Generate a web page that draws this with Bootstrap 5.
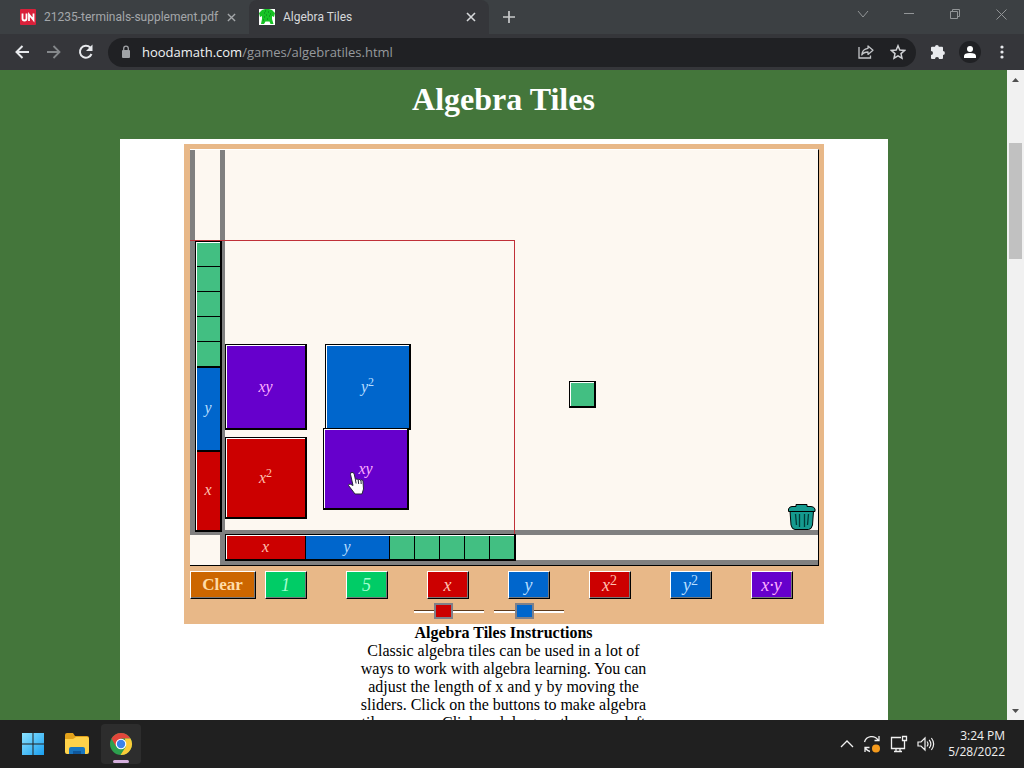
<!DOCTYPE html>
<html lang="en">
<head>
<meta charset="utf-8">
<meta name="viewport" content="width=device-width, initial-scale=1">
<title>Algebra Tiles</title>
<link href="https://cdn.jsdelivr.net/npm/bootstrap@5.3.0/dist/css/bootstrap.min.css" rel="stylesheet">
<style>
  body { font: 12px/16px "Open Sans", "Noto Sans", sans-serif; background: #44763b; color: #dfe1e3; }
  button, a { color: inherit; text-decoration: none; }
  svg { display: block; flex: none; }
  .flat { border: 0; background: none; padding: 0; display: flex; align-items: center; justify-content: center; }

  /* browser frame */
  .tabstrip { height: 34px; background: #3c4043; }
  .tab-item { width: 240px; height: 34px; padding: 0 13px 0 20px; color: #a4a7aa; font-family: Roboto, sans-serif; }
  .tab-item .tab-link { flex: 1; white-space: nowrap; }
  .tab-item.current { background: #35363a; color: #d6d8da; border-radius: 8px 8px 0 0; padding: 0 13px 0 10px; }
  .first-tab { width: 249px; }
  .new-tab { width: 40px; }
  .win-btn { width: 46px; height: 28px; color: #929597; }
  .toolbar { height: 36px; background: #35363a; padding-right: 6px; padding-left: 6px; }
  .tool-btn { width: 32px; height: 32px; color: #e8eaed; }
  .omnibox { flex: 1; height: 29px; border-radius: 15px; background: #202124; margin: 0 6px; padding: 0 2px 0 12px; }
  .omnibox input, .omnibox label { font-size: 13px; line-height: 20px; }
  .omnibox label { color: #f1f3f4; margin-left: 10px; }
  .omnibox input { flex: 1; min-width: 0; border: 0; background: none; color: #96999d; padding: 0; outline: 0; }
  .avatar { width: 22px; height: 22px; border-radius: 50%; background: #202124; overflow: hidden; }

  /* page */
  .viewport { flex: 1; min-height: 0; }
  .doc { flex: 1; overflow: hidden; font-family: "Liberation Serif", "Times New Roman", serif; font-size: 16px; line-height: 18px; color: #000; }
  .doc h1 { font-size: 32px; line-height: 36px; font-weight: 700; color: #fff; padding: 11px 0 22px; margin: 0; }
  .sheet { max-width: 768px; background: #fff; padding-top: 5px; }
  .applet { max-width: 640px; background: #e8b888; padding: 5px 5px 4px 6px; height: 480px; }
  .notes { width: 290px; }
  .scroller { width: 17px; background: #f1f1f1; padding: 8px 2px 7px; color: #505050; }
  .thumb { width: 13px; height: 116px; background: #c1c1c1; margin-top: 61px; }

  /* board: tiles lie on a free canvas */
  .board { position: relative; height: 417px; background: #fdf8f1; border: 1px solid #000; border-width: 0 1px 1px 0; border-top: 1px solid #fff; margin-bottom: 5px; overflow: hidden; }
  .board > * { position: absolute; }
  .rail { background: #808080; }
  .tile { border: 1px solid #000; border-width: 1px 2px 2px 1px; box-shadow: inset 1px 1px #fff; display: flex; align-items: center; justify-content: center; font-style: italic; padding-left: 1px; }
  .strip { display: flex; border: 1px solid #000; border-width: 1px 2px 2px 1px; box-shadow: inset 1px 1px #fff; padding: 1px 0 0 1px; }
  .strip > span { display: flex; align-items: center; justify-content: center; font-style: italic; padding-bottom: 2px; }
  .strip.down { flex-direction: column; }
  .down > span + span { border-top: 1px solid #000; }
  .across > span + span { border-left: 1px solid #000; }
  .unit { background: #42bf82; flex: 0 0 25px; }
  .down .unit:first-child { flex-basis: 23px; }
  .ylen { flex: 0 0 84px; }
  .xlen { flex: 1; }
  .strip.down .ylen, .strip.down .xlen { border-top-width: 2px; }
  .red { background: #c00; color: #ffc0b0; }
  .blue { background: #06c; color: #b8deff; }
  .violet { background: #60c; color: #ffb0ff; }
  .green { background: #0c6; color: #a4ffd0; }
  .orange { background: #cc6600; color: #ffdca8; }
  sup { font-size: 12px; top: -6px; line-height: 0; font-style: normal; }
  .guide { border: 1px solid #c03038; border-width: 1px 1px 0 0; }

  .keys { gap: 39px; }
  .key { width: 42px; height: 28px; padding: 0; font-style: italic; font-size: 18px; line-height: 24px; border: 1px solid #fff; border-right-color: #000; border-bottom-color: #000; box-shadow: inset -1px -1px #777; border-radius: 0; }
  .key sup { font-size: 14px; }
  .key.wide { width: 66px; margin-right: -30px; font-style: normal; font-weight: 700; font-size: 17px; }
  .sliders { gap: 10px; padding-left: 224px; margin-top: 3px; }
  .sliders input { appearance: none; -webkit-appearance: none; width: 70px; height: 18px; background: none; margin: 0; display: block; }
  .sliders input::-webkit-slider-runnable-track { height: 3px; background: #fff; border-top: 1px solid #5c3a1c; }
  .sliders input::-webkit-slider-thumb { -webkit-appearance: none; width: 19px; height: 16px; margin-top: -8px; border: 2px solid #808088; background: #c00; }
  .sliders input.yval::-webkit-slider-thumb { background: #06c; }

  /* taskbar */
  .taskbar { height: 48px; background: #202020; padding: 0 19px 0 13px; }
  .task { width: 40px; height: 40px; border-radius: 4px; margin-right: 4px; position: relative; }
  .task.open { background: #2d2d2d; }
  .task.open::after { content: ""; position: absolute; left: 12px; bottom: 1px; width: 16px; height: 3px; border-radius: 2px; background: #d5b0de; }
  .tray { gap: 9px; color: #f0f0f0; }
</style>
</head>
<body class="d-flex flex-column vh-100 overflow-hidden">

<header>
  <div class="tabstrip d-flex">
    <div class="tab-item first-tab d-flex align-items-center">
      <svg width="16" height="16" viewBox="0 0 16 16" class="me-2"><rect width="16" height="16" rx="1" fill="#d9203a"/><path d="M2.500 4.500v5q0 2 2 2t2-2v-5M9 12V5.500l4.500 5.500V4.500" fill="none" stroke="#fff" stroke-width="1.800"/></svg>
      <a class="tab-link" href="#">21235-terminals-supplement.pdf</a>
      <button class="flat" aria-label="Close tab"><svg width="9" height="9" viewBox="0 0 10 10" stroke="currentColor" stroke-width="1.500"><path d="M1 1l8 8M9 1l-8 8"/></svg></button>
    </div>
    <div class="tab-item current d-flex align-items-center">
      <svg width="16" height="16" viewBox="0 0 16 16" class="me-2"><path fill="#fff" d="M0 0h16v16H0z"/><path d="M3 1l3-1h4l3 1 3 3-1 4-2-1v3l1.500 5h-3l-1-2.500h-4L5 15H2l1-5V7L1 8 0 4z" fill="#17c325"/><path d="M5 4h1M9 3h1M7 6h1M10 7h1M5 8h1M8 10h1M6 2h1M11 5h1M4 11h1" stroke="#087a18"/></svg>
      <a class="tab-link" href="#">Algebra Tiles</a>
      <button class="flat" aria-label="Close tab"><svg width="10" height="10" viewBox="0 0 10 10" stroke="currentColor" stroke-width="1.600"><path d="M1 1l8 8M9 1l-8 8"/></svg></button>
    </div>
    <button class="flat new-tab" aria-label="New tab"><svg width="12" height="12" viewBox="0 0 12 12" stroke="#c8cacc" stroke-width="1.700"><path d="M6 0v12M0 6h12"/></svg></button>
    <div class="d-flex ms-auto">
      <button class="flat win-btn" aria-label="Search tabs"><svg width="12" height="8" viewBox="0 0 12 8" fill="none" stroke="currentColor"><path d="M1 1l5 6 5-6"/></svg></button>
      <button class="flat win-btn" aria-label="Minimize"><svg width="10" height="2" viewBox="0 0 10 2"><path fill="currentColor" d="M0 0h10v1H0z"/></svg></button>
      <button class="flat win-btn" aria-label="Restore"><svg width="10" height="10" viewBox="0 0 10 10" fill="none" stroke="currentColor"><path d="M.5 2.500h7v7h-7zM2.500 2.500v-2h7v7h-2"/></svg></button>
      <button class="flat win-btn" aria-label="Close"><svg width="11" height="11" viewBox="0 0 11 11" stroke="currentColor"><path d="M.5.500l10 10M10.500.500l-10 10"/></svg></button>
    </div>
  </div>
  <div class="toolbar d-flex align-items-center">
    <button class="flat tool-btn" aria-label="Back"><svg width="14" height="14" viewBox="0 0 14 14" fill="none" stroke="currentColor" stroke-width="2"><path d="M14 7H1.500M7.500 1l-6 6 6 6"/></svg></button>
    <button class="flat tool-btn" aria-label="Forward"><svg width="14" height="14" viewBox="0 0 14 14" fill="none" stroke="#85888b" stroke-width="1.800"><path d="M0 7h12.500M6.500 1l6 6-6 6"/></svg></button>
    <button class="flat tool-btn" aria-label="Reload"><svg width="16" height="16" viewBox="0 0 16 16"><path d="M13.500 10a6 6 0 1 1-1.300-6.500" fill="none" stroke="currentColor" stroke-width="2"/><path d="M14.500.500V7H8z" fill="currentColor"/></svg></button>
    <form class="omnibox d-flex align-items-center">
      <svg width="12" height="14" viewBox="0 0 12 14"><rect x="2" y="5" width="8" height="8" rx="1" fill="#a0a3a6"/><path d="M3.700 6V3.500a2.300 2.300 0 0 1 4.600 0V6" fill="none" stroke="#a0a3a6" stroke-width="1.300"/></svg>
      <label for="address">hoodamath.com</label>
      <input id="address" type="text" value="/games/algebratiles.html">
      <button type="button" class="flat tool-btn" aria-label="Share"><svg width="16" height="14" viewBox="0 0 16 14" fill="none" stroke="#c3c5c8" stroke-width="1.300"><path d="M1 2v11h11.500v-2.500"/><path d="M10 1l5 4.200-5 4.200V7C7 7 5 8 3.800 10 4 6.500 6 3.800 10 3.300z" stroke-linejoin="round"/></svg></button>
      <button type="button" class="flat tool-btn" aria-label="Bookmark"><svg width="16" height="16" viewBox="0 0 16 16" fill="none" stroke="#d0d2d5" stroke-width="1.500"><path d="M8 1.800l1.800 4.300 4.700.4-3.500 3.100 1 4.600L8 11.800l-4 2.400 1-4.600L1.500 6.500l4.700-.4z"/></svg></button>
    </form>
    <button class="flat tool-btn" aria-label="Extensions"><svg width="16" height="16" viewBox="0 0 16 16" fill="currentColor"><path d="M5 2.800a1.900 1.900 0 0 1 3.800 0H12q1 0 1 1v3.300a1.900 1.900 0 0 1 0 3.800V14q0 1-1 1H9a2 2 0 0 0-4 0H2q-1 0-1-1v-3a2 2 0 0 0 0-4V3.800q0-1 1-1z"/></svg></button>
    <button class="flat tool-btn" aria-label="Profile"><span class="avatar"><svg width="22" height="22" viewBox="0 0 22 22" fill="#fff"><circle cx="11" cy="8" r="3"/><path d="M5 17v-2q0-3 6-3t6 3v2z"/></svg></span></button>
    <button class="flat tool-btn" aria-label="Menu"><svg width="4" height="14" viewBox="0 0 4 14" fill="currentColor"><circle cx="2" cy="2" r="1.600"/><circle cx="2" cy="7" r="1.600"/><circle cx="2" cy="12" r="1.600"/></svg></button>
  </div>
</header>

<div class="viewport d-flex">
  <main class="doc">
    <h1 class="text-center">Algebra Tiles</h1>
    <div class="sheet mx-auto">
      <div class="applet mx-auto">
        <div class="board">
          <div class="rail" style="left:0;top:0;width:5px;height:385px"></div>
          <div class="rail" style="left:30px;top:0;width:5px;height:415px"></div>
          <div class="rail" style="left:0;right:0;top:380px;height:5px"></div>
          <div class="rail" style="left:30px;right:0;top:410px;height:5px"></div>
          <div class="guide" style="left:0;top:90px;width:325px;height:320px"></div>
          <div class="strip down" style="left:5px;top:91px;width:27px;height:291px">
            <span class="unit"></span><span class="unit"></span><span class="unit"></span><span class="unit"></span><span class="unit"></span>
            <span class="blue ylen">y</span><span class="red xlen">x</span>
          </div>
          <div class="strip across" style="left:35px;top:384px;width:291px;height:27px">
            <span class="red xlen">x</span><span class="blue ylen">y</span>
            <span class="unit"></span><span class="unit"></span><span class="unit"></span><span class="unit"></span><span class="unit"></span>
          </div>
          <div class="tile violet" style="left:35px;top:194px;width:82px;height:86px">xy</div>
          <div class="tile blue" style="left:135px;top:194px;width:86px;height:86px"><span>y<sup>2</sup></span></div>
          <div class="tile red" style="left:35px;top:287px;width:82px;height:82px"><span>x<sup>2</sup></span></div>
          <div class="tile violet" style="left:133px;top:278px;width:86px;height:82px">xy</div>
          <div class="tile unit" style="left:379px;top:231px;width:27px;height:27px"></div>
          <svg style="left:597px;top:353px" width="29" height="28" viewBox="0 0 29 28"><path d="M3 8l1 14q1 4.500 4 4.500h13.500q3 0 4-4.500l1-14z" fill="#159a8f" stroke="#000"/><path d="M1.500 8.500V6q1-2.500 3.500-2.500h4v-2h11v2h4q3 0 4 2.500v2.500z" fill="#159a8f" stroke="#000"/><path d="M8.500 11l1 11M12.500 11v13M17.500 11v13M21.500 11l-1 11" stroke="#003c38" stroke-width="1.300"/></svg>
          <svg style="left:157px;top:321px" width="18" height="25" viewBox="0 0 18 25"><path d="M5 1.500Q3.300 1 3.500 3.300L6 14.500l-2.500-1.300q-2-.7-2 1.300L5 19l3 4h7l1.500-5-.5-8q-.5-2-2-1l-.2.700q-.8-2-2.600-.9-.9-1.500-2.800-.4L7.200 3Q6.500 1 5 1.500z" fill="#fff" stroke="#26263a"/><path d="M8.400 8.500l.7 4M11.200 9l.5 4M14 10l.2 3" stroke="#26263a"/></svg>
        </div>
        <div class="keys d-flex">
          <button class="key wide orange">Clear</button>
          <button class="key green">1</button>
          <button class="key green">5</button>
          <button class="key red">x</button>
          <button class="key blue">y</button>
          <button class="key red">x<sup>2</sup></button>
          <button class="key blue">y<sup>2</sup></button>
          <button class="key violet">x·y</button>
        </div>
        <div class="sliders d-flex">
          <input type="range" min="0" max="100" value="41" aria-label="Length of x">
          <input type="range" class="yval" min="0" max="100" value="42" aria-label="Length of y">
        </div>
      </div>
      <div class="notes mx-auto text-center">
        <b>Algebra Tiles Instructions</b><br>
        Classic algebra tiles can be used in a lot of ways to work with algebra learning. You can adjust the length of x and y by moving the sliders. Click on the buttons to make algebra tiles appear. Click and drag on the upper left
      </div>
    </div>
  </main>
  <div class="scroller d-flex flex-column justify-content-between align-items-center">
    <div>
      <svg class="mx-auto" width="7" height="4" viewBox="0 0 7 4"><path d="M0 4l3.500-4L7 4z" fill="currentColor"/></svg>
      <div class="thumb"></div>
    </div>
    <svg width="7" height="4" viewBox="0 0 7 4"><path d="M0 0l3.500 4L7 0z" fill="currentColor"/></svg>
  </div>
</div>

<footer class="taskbar d-flex align-items-center">
  <button class="flat task" aria-label="Start"><svg width="24" height="24" viewBox="0 0 24 24"><defs><linearGradient id="sky" x2="1" y2="1"><stop stop-color="#8be3ff"/><stop offset="1" stop-color="#1a9ff0"/></linearGradient></defs><path d="M1 1h10.500v10.500H1zM12.500 1H23v10.500H12.500zM1 12.500h10.500V23H1zM12.500 12.500H23V23H12.500z" fill="url(#sky)"/></svg></button>
  <button class="flat task" aria-label="File Explorer"><svg width="26" height="24" viewBox="0 0 26 24"><path d="M1 3q0-2 2-2h6l2 3h12q2 0 2 2v4H1z" fill="#e3a21a"/><path d="M1 7h8l3-2h11q2 0 2 2v13q0 2-2 2H3q-2 0-2-2z" fill="#ffd24a"/><path d="M5 22v-5q0-2 2-2h12q2 0 2 2v5z" fill="#1976c0"/><path d="M9 22v-3h8v3z" fill="#0f579c"/></svg></button>
  <button class="flat task open" aria-label="Chrome"><svg width="24" height="24" viewBox="0 0 24 24"><circle cx="12" cy="12" r="11" fill="#2da04e"/><path d="M2.500 6.500a11 11 0 0 1 19 0H12l-5 8z" fill="#e2463b"/><path d="M21.500 6.500A11 11 0 0 1 11.500 23l5.300-8.200L16 6.500z" fill="#fbcb38"/><circle cx="12" cy="12" r="5.300" fill="#fff"/><circle cx="12" cy="12" r="4.200" fill="#3b82ea"/></svg></button>
  <div class="tray d-flex align-items-center ms-auto">
    <svg width="14" height="8" viewBox="0 0 14 8" fill="none" stroke="currentColor" stroke-width="1.300"><path d="M1 7l6-6 6 6"/></svg>
    <svg width="18" height="18" viewBox="0 0 18 18" fill="none" stroke="currentColor" stroke-width="1.300"><path d="M1.500 7A7.500 7.500 0 0 1 15 5M16 1v4.500h-4.500M7 16.500Q4.500 16 2.500 13.500M6.500 12.500H2v4.500"/><circle cx="13" cy="13.500" r="4" fill="#f59a1c" stroke="none"/></svg>
    <svg width="18" height="18" viewBox="0 0 18 18" fill="none" stroke="currentColor" stroke-width="1.300"><path d="M11 2.500H1.500v11h13V9M4 16.500h8M6 13.500v3M10 13.500v3M12.500 1.500h4v4h-4zM14.500 5.500v8"/></svg>
    <svg width="18" height="16" viewBox="0 0 18 16" fill="none" stroke="currentColor" stroke-width="1.200"><path d="M1 6h3l4-4v12l-4-4H1zM10 5.500q2 2.500 0 5M12.200 3.800q3.300 4.200 0 8.400M14.400 2q4.500 6 0 12"/></svg>
    <time class="text-end ms-1">3:24 PM<br>5/28/2022</time>
  </div>
</footer>
<script src="https://cdn.jsdelivr.net/npm/bootstrap@5.3.0/dist/js/bootstrap.bundle.min.js"></script>
</body>
</html>
